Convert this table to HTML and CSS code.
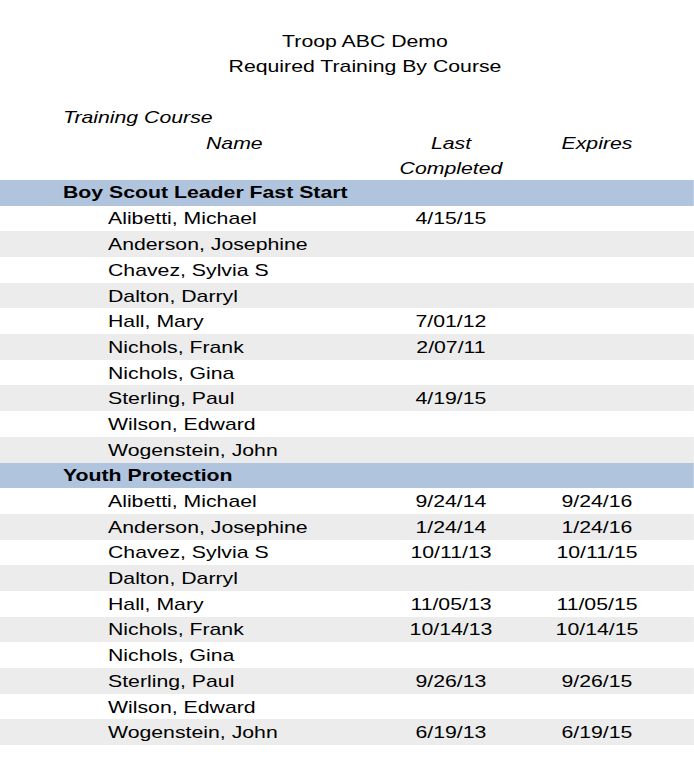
FILE: index.html
```html
<!DOCTYPE html>
<html>
<head>
<meta charset="utf-8">
<title>Required Training By Course</title>
<link rel="stylesheet" href="styles.css">
</head>
<body>
<div class="page">
  <div class="title">
    <div>Troop ABC Demo</div>
    <div>Required Training By Course</div>
  </div>
  <div class="head">
    <div class="head-course">Training Course</div>
    <div class="head-grid">
      <div class="h-name">Name</div>
      <div class="h-last">Last<br>Completed</div>
      <div class="h-exp">Expires</div>
    </div>
  </div>

  <div class="group">
    <div class="band">Boy Scout Leader Fast Start</div>
    <div class="row"><span class="c-name">Alibetti, Michael</span><span class="c-last">4/15/15</span><span class="c-exp"></span></div>
    <div class="row"><span class="c-name">Anderson, Josephine</span><span class="c-last"></span><span class="c-exp"></span></div>
    <div class="row"><span class="c-name">Chavez, Sylvia S</span><span class="c-last"></span><span class="c-exp"></span></div>
    <div class="row"><span class="c-name">Dalton, Darryl</span><span class="c-last"></span><span class="c-exp"></span></div>
    <div class="row"><span class="c-name">Hall, Mary</span><span class="c-last">7/01/12</span><span class="c-exp"></span></div>
    <div class="row"><span class="c-name">Nichols, Frank</span><span class="c-last">2/07/11</span><span class="c-exp"></span></div>
    <div class="row"><span class="c-name">Nichols, Gina</span><span class="c-last"></span><span class="c-exp"></span></div>
    <div class="row"><span class="c-name">Sterling, Paul</span><span class="c-last">4/19/15</span><span class="c-exp"></span></div>
    <div class="row"><span class="c-name">Wilson, Edward</span><span class="c-last"></span><span class="c-exp"></span></div>
    <div class="row"><span class="c-name">Wogenstein, John</span><span class="c-last"></span><span class="c-exp"></span></div>
  </div>

  <div class="group">
    <div class="band">Youth Protection</div>
    <div class="row"><span class="c-name">Alibetti, Michael</span><span class="c-last">9/24/14</span><span class="c-exp">9/24/16</span></div>
    <div class="row"><span class="c-name">Anderson, Josephine</span><span class="c-last">1/24/14</span><span class="c-exp">1/24/16</span></div>
    <div class="row"><span class="c-name">Chavez, Sylvia S</span><span class="c-last">10/11/13</span><span class="c-exp">10/11/15</span></div>
    <div class="row"><span class="c-name">Dalton, Darryl</span><span class="c-last"></span><span class="c-exp"></span></div>
    <div class="row"><span class="c-name">Hall, Mary</span><span class="c-last">11/05/13</span><span class="c-exp">11/05/15</span></div>
    <div class="row"><span class="c-name">Nichols, Frank</span><span class="c-last">10/14/13</span><span class="c-exp">10/14/15</span></div>
    <div class="row"><span class="c-name">Nichols, Gina</span><span class="c-last"></span><span class="c-exp"></span></div>
    <div class="row"><span class="c-name">Sterling, Paul</span><span class="c-last">9/26/13</span><span class="c-exp">9/26/15</span></div>
    <div class="row"><span class="c-name">Wilson, Edward</span><span class="c-last"></span><span class="c-exp"></span></div>
    <div class="row"><span class="c-name">Wogenstein, John</span><span class="c-last">6/19/13</span><span class="c-exp">6/19/15</span></div>
  </div>
</div>
</body>
</html>
```

FILE: styles.css
```css
html, body {
  margin: 0;
  padding: 0;
  background: #ffffff;
}

body {
  font-family: "Liberation Sans", Arial, sans-serif;
  font-size: 17px;
  color: #000000;
  overflow: hidden;
}

/* The report is rendered horizontally stretched */
.page {
  width: 555.2px;
  transform: scaleX(1.25);
  transform-origin: 0 0;
}

.title {
  margin-top: 29px;
  padding-left: 28.8px;
  text-align: center;
  line-height: 25px;
}

.head {
  margin-top: 26.35px;
  height: 74.65px;
  font-style: italic;
  line-height: 25.5px;
}

.head-course {
  padding-left: 50.4px;
}

.head-grid {
  display: grid;
  grid-template-columns: 86.4px 219.6px 109.6px 124px;
}

.h-name {
  grid-column: 2;
  padding-left: 78.4px;
}

.h-last {
  grid-column: 3;
  text-align: center;
}

.h-exp {
  grid-column: 4;
  text-align: center;
}

.band {
  box-sizing: border-box;
  height: 25.7px;
  background: #b0c4de;
  font-weight: bold;
  line-height: 20px;
  padding-top: 3.2px;
  padding-left: 50.4px;
}

.row {
  box-sizing: border-box;
  height: 25.7px;
  display: grid;
  grid-template-columns: 86.4px 219.6px 109.6px 124px;
  line-height: 20px;
  padding-top: 3.8px;
  white-space: nowrap;
}

.row:nth-child(odd) {
  background: #ececec;
}

.c-name {
  grid-column: 2;
}

.c-last {
  grid-column: 3;
  text-align: center;
}

.c-exp {
  grid-column: 4;
  text-align: center;
}
```
